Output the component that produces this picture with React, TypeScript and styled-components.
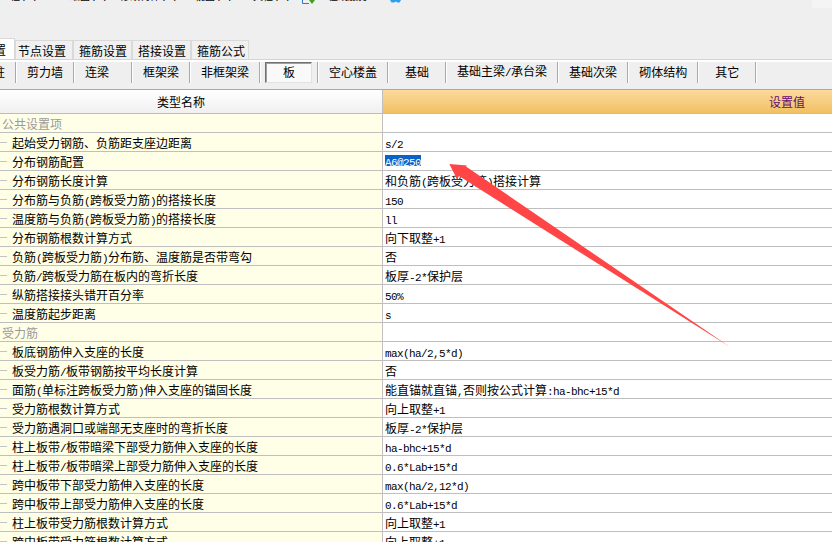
// App.tsx
import React from 'react';
import styled, { createGlobalStyle } from 'styled-components';

const GlobalStyle = createGlobalStyle`
  html, body {
    margin: 0;
    padding: 0;
    height: 100%;
    overflow: hidden;
    background: #f0f0f0;
  }
`;

const Page = styled.div`
  position: relative;
  width: 832px;
  height: 542px;
  overflow: hidden;
  background: #efefef;
  color: #000;
  font-family: "Noto Sans CJK SC", "Liberation Sans", sans-serif;
  font-size: 12px;
`;

// half-width characters: 6px wide each, as in the original bitmap font
const Latin = styled.span`
  font-family: "Liberation Mono", monospace;
  font-size: 11px;
  letter-spacing: -0.6px;
`;

// the menu bar is cut off by the top of the screenshot
const MenuStrip = styled.div`
  display: flex;
  align-items: flex-start;
  height: 8px;
  margin-bottom: 30px;
  font-size: 10px;
`;

const MenuClip = styled.div<{ $gap: number; $width: number }>`
  flex: none;
  width: ${(p) => p.$width}px;
  height: 2px;
  margin-left: ${(p) => p.$gap}px;
  overflow: hidden;
  display: flex;
  align-items: flex-end;
  justify-content: flex-end;
  line-height: 12px;
  white-space: nowrap;
`;

const MenuIcon = styled.svg<{ $gap: number }>`
  flex: none;
  margin-left: ${(p) => p.$gap}px;
`;

const MenuCorner = styled.div`
  width: 20px;
  height: 8px;
  margin-left: auto;
  background: #f4f4f4;
`;

const TabRow = styled.div`
  display: flex;
  align-items: flex-end;
  height: 21px;
  margin-left: -45px;
`;

const Tab = styled.div<{ $active?: boolean; $left: number; $right: number }>`
  flex: none;
  height: ${(p) => (p.$active ? 21 : 19)}px;
  box-sizing: border-box;
  padding: 0 ${(p) => p.$right}px 0 ${(p) => p.$left}px;
  display: flex;
  align-items: center;
  line-height: 17px;
  background: ${(p) => (p.$active ? '#fff' : '#f0f0f0')};
  border: 1px solid #d9d9d9;
  border-bottom: none;
`;

const ToolbarWrap = styled.div`
  border-top: 1px solid #d4d4d4;
  background: #fff;
  padding-top: 2px;
  height: 28px;
`;

const Toolbar = styled.div`
  height: 28px;
  box-sizing: border-box;
  margin-left: -42px;
  display: flex;
  align-items: flex-start;
  background: #efefef;
  border-bottom: 1px solid #a9a9a9;
`;

const ToolItem = styled.div<{ $pressed?: boolean; $align: string }>`
  flex: none;
  min-width: 36px;
  padding: 0 10px 1px 11px;
  height: 20px;
  display: flex;
  align-items: center;
  justify-content: ${(p) => p.$align};
  border-right: 1px solid #a8a8a8;
  box-shadow: 1px 0 0 #fff;
  position: relative;
  line-height: 20px;
  ${(p) =>
    p.$pressed
      ? `
    &::before {
      content: '';
      position: absolute;
      left: 5px;
      right: 5px;
      top: 0;
      bottom: 0;
      background: #f9f9f9;
      border: 1px solid;
      border-color: #6e6e6e #e2e2e2 #e2e2e2 #6e6e6e;
      box-shadow: inset 1px 1px 0 #a0a0a0;
    }
  `
      : ''}
`;

const ToolLabel = styled.span`
  position: relative;
`;

const Table = styled.div`
  width: 832px;
`;

const HeaderRow = styled.div`
  display: flex;
  height: 24px;
  box-sizing: border-box;
  border-bottom: 1px solid #bdbdbd;
`;

const HeaderName = styled.div`
  flex: none;
  width: 383px;
  box-sizing: border-box;
  padding-right: 20px;
  display: flex;
  align-items: center;
  justify-content: center;
  background: linear-gradient(#ffffff, #f0f0f0);
  border-right: 1px solid #c0c0c0;
`;

const HeaderValue = styled.div`
  flex: 1;
  box-sizing: border-box;
  padding-right: 27px;
  display: flex;
  align-items: center;
  justify-content: flex-end;
  color: #660a70;
  background: linear-gradient(#fbda9c, #f2c063);
`;

const Row = styled.div`
  display: flex;
  height: 19px;
  box-sizing: border-box;
  border-bottom: 1px solid #bfbfbf;
  line-height: 20px;
  white-space: nowrap;
`;

const NameCell = styled.div<{ $group?: boolean }>`
  flex: none;
  width: 383px;
  box-sizing: border-box;
  position: relative;
  padding-left: ${(p) => (p.$group ? 2 : 12)}px;
  background: #ffffe7;
  border-right: 1px solid #bfbfbf;
  color: ${(p) => (p.$group ? '#9a9a9a' : '#000')};
`;

const Dash = styled.span`
  position: absolute;
  left: 0;
  top: 9px;
  width: 7px;
  height: 1px;
  background: #c4c4c4;
`;

const ValueCell = styled.div`
  flex: 1;
  padding-left: 2px;
  background: #fff;
`;

const Selected = styled.span`
  display: inline-block;
  height: 11px;
  line-height: 11px;
  margin-top: 3px;
  vertical-align: top;
  background: #0a64c8;
  color: #fff;
`;

const ArrowOverlay = styled.svg`
  position: absolute;
  left: 0;
  top: 0;
  pointer-events: none;
`;

const Mixed: React.FC<{ text: string }> = ({ text }) => (
  <>
    {text.split(/([\x20-\x7e]+)/).map((part, i) =>
      /^[\x20-\x7e]+$/.test(part) ? <Latin key={i}>{part}</Latin> : part
    )}
  </>
);

const menus = [
  { label: '工程(E)', gap: 0, width: 38 },
  { label: '绘图(D)', gap: 32, width: 38 },
  { label: '修改构件(S)', gap: 10, width: 60 },
  { label: '视图(V)', gap: 17, width: 38 },
  { label: '工具栏(T)', gap: 7, width: 51 },
];

const tabs = [
  { label: '节点设置', left: 2, right: 6 },
  { label: '箍筋设置', left: 5, right: 4 },
  { label: '搭接设置', left: 5, right: 4 },
  { label: '箍筋公式', left: 5, right: 3 },
];

const tools = [
  { label: '柱', align: 'flex-end' },
  { label: '剪力墙', align: 'center' },
  { label: '连梁', align: 'flex-start' },
  { label: '框架梁', align: 'center' },
  { label: '非框架梁', align: 'center' },
  { label: '板', align: 'center', pressed: true },
  { label: '空心楼盖', align: 'center' },
  { label: '基础', align: 'center' },
  { label: '基础主梁/承台梁', align: 'center' },
  { label: '基础次梁', align: 'center' },
  { label: '砌体结构', align: 'center' },
  { label: '其它', align: 'center' },
];

type RowData = { name: string; value?: string; group?: boolean };

const rows: RowData[] = [
  { name: '公共设置项', group: true },
  { name: '起始受力钢筋、负筋距支座边距离', value: 's/2' },
  { name: '分布钢筋配置', value: 'A6@250' },
  { name: '分布钢筋长度计算', value: '和负筋(跨板受力筋)搭接计算' },
  { name: '分布筋与负筋(跨板受力筋)的搭接长度', value: '150' },
  { name: '温度筋与负筋(跨板受力筋)的搭接长度', value: 'll' },
  { name: '分布钢筋根数计算方式', value: '向下取整+1' },
  { name: '负筋(跨板受力筋)分布筋、温度筋是否带弯勾', value: '否' },
  { name: '负筋/跨板受力筋在板内的弯折长度', value: '板厚-2*保护层' },
  { name: '纵筋搭接接头错开百分率', value: '50%' },
  { name: '温度筋起步距离', value: 's' },
  { name: '受力筋', group: true },
  { name: '板底钢筋伸入支座的长度', value: 'max(ha/2,5*d)' },
  { name: '板受力筋/板带钢筋按平均长度计算', value: '否' },
  { name: '面筋(单标注跨板受力筋)伸入支座的锚固长度', value: '能直锚就直锚,否则按公式计算:ha-bhc+15*d' },
  { name: '受力筋根数计算方式', value: '向上取整+1' },
  { name: '受力筋遇洞口或端部无支座时的弯折长度', value: '板厚-2*保护层' },
  { name: '柱上板带/板带暗梁下部受力筋伸入支座的长度', value: 'ha-bhc+15*d' },
  { name: '柱上板带/板带暗梁上部受力筋伸入支座的长度', value: '0.6*Lab+15*d' },
  { name: '跨中板带下部受力筋伸入支座的长度', value: 'max(ha/2,12*d)' },
  { name: '跨中板带上部受力筋伸入支座的长度', value: '0.6*Lab+15*d' },
  { name: '柱上板带受力筋根数计算方式', value: '向上取整+1' },
  { name: '跨中板带受力筋根数计算方式', value: '向上取整+1' },
];

const App: React.FC = () => {
  return (
    <Page>
      <GlobalStyle />
      <MenuStrip>
        {menus.map((m) => (
          <MenuClip key={m.label} $gap={m.gap} $width={m.width}>
            <Mixed text={m.label} />
          </MenuClip>
        ))}
        <MenuIcon $gap={11} width="14" height="4" viewBox="0 0 14 4">
          <path d="M0.5 0V3.5H7" fill="none" stroke="#2a78c8" />
          <path d="M7 0h6l-3 4z" fill="#3ca020" />
        </MenuIcon>
        <MenuClip $gap={4} $width={48}>
          在线服务
        </MenuClip>
        <MenuIcon $gap={22} width="12" height="3" viewBox="0 0 12 3">
          <path d="M0 0h11l-1.5 2.5h-2L6 1.5 4 2.5H1.5z" fill="#2aa0f0" />
        </MenuIcon>
        <MenuCorner />
      </MenuStrip>

      <TabRow>
        <Tab $active $left={2} $right={8}>
          计算设置
        </Tab>
        {tabs.map((t) => (
          <Tab key={t.label} $left={t.left} $right={t.right}>
            {t.label}
          </Tab>
        ))}
      </TabRow>

      <ToolbarWrap>
        <Toolbar>
          {tools.map((t) => (
            <ToolItem key={t.label} $pressed={t.pressed} $align={t.align}>
              <ToolLabel>
                <Mixed text={t.label} />
              </ToolLabel>
            </ToolItem>
          ))}
        </Toolbar>
      </ToolbarWrap>

      <Table>
        <HeaderRow>
          <HeaderName>类型名称</HeaderName>
          <HeaderValue>设置值</HeaderValue>
        </HeaderRow>
        {rows.map((r) => (
          <Row key={r.name}>
            <NameCell $group={r.group}>
              {!r.group && <Dash />}
              <Mixed text={r.name} />
            </NameCell>
            <ValueCell>
              {r.value === 'A6@250' ? (
                <Selected>
                  <Latin>{r.value}</Latin>
                </Selected>
              ) : (
                r.value && <Mixed text={r.value} />
              )}
            </ValueCell>
          </Row>
        ))}
      </Table>

      <ArrowOverlay width="832" height="542" viewBox="0 0 832 542">
        <path d="M449.3 164 L467 165.5 L466 166.5 L730 347 L459 176 L457 179 Z" fill="#ff4545" />
      </ArrowOverlay>
    </Page>
  );
};

export default App;
